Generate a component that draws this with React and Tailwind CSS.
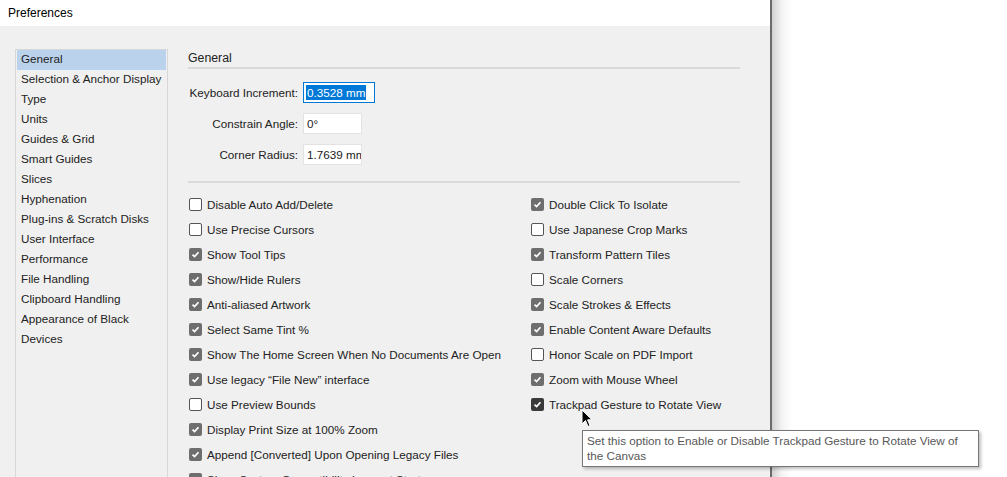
import { useState } from 'react'

const SECTIONS = [
  'General',
  'Selection & Anchor Display',
  'Type',
  'Units',
  'Guides & Grid',
  'Smart Guides',
  'Slices',
  'Hyphenation',
  'Plug-ins & Scratch Disks',
  'User Interface',
  'Performance',
  'File Handling',
  'Clipboard Handling',
  'Appearance of Black',
  'Devices',
]

const LEFT_OPTIONS = [
  { label: 'Disable Auto Add/Delete', on: false },
  { label: 'Use Precise Cursors', on: false },
  { label: 'Show Tool Tips', on: true },
  { label: 'Show/Hide Rulers', on: true },
  { label: 'Anti-aliased Artwork', on: true },
  { label: 'Select Same Tint %', on: true },
  { label: 'Show The Home Screen When No Documents Are Open', on: true },
  { label: 'Use legacy \u201cFile New\u201d interface', on: true },
  { label: 'Use Preview Bounds', on: false },
  { label: 'Display Print Size at 100% Zoom', on: true },
  { label: 'Append [Converted] Upon Opening Legacy Files', on: true },
  { label: 'Show System Compatibility Issue at Startup', on: true },
]

const RIGHT_OPTIONS = [
  { label: 'Double Click To Isolate', on: true },
  { label: 'Use Japanese Crop Marks', on: false },
  { label: 'Transform Pattern Tiles', on: true },
  { label: 'Scale Corners', on: false },
  { label: 'Scale Strokes & Effects', on: true },
  { label: 'Enable Content Aware Defaults', on: true },
  { label: 'Honor Scale on PDF Import', on: false },
  { label: 'Zoom with Mouse Wheel', on: true },
  { label: 'Trackpad Gesture to Rotate View', on: true, hover: true },
]

function Checkbox({ on, hover }) {
  if (!on) {
    return <span className="w-[13px] h-[13px] shrink-0 bg-white border border-[#555] rounded-[2px]" />
  }
  return (
    <span className={`w-[13px] h-[13px] shrink-0 rounded-[2px] flex items-center justify-center ${hover ? 'bg-[#3a3a3a]' : 'bg-[#6e6e6e]'}`}>
      <svg width="9" height="9" viewBox="0 0 9 9">
        <path d="M1.5 4.6 L3.6 6.6 L7.5 2.2" fill="none" stroke="#fff" strokeWidth="1.7" />
      </svg>
    </span>
  )
}

function Option({ label, on, hover }) {
  return (
    <div className="h-[25px] flex items-center gap-[5px]">
      <Checkbox on={on} hover={hover} />
      <span className="whitespace-nowrap">{label}</span>
    </div>
  )
}

function Field({ label, children }) {
  return (
    <div className="flex items-center h-[31px]">
      <span className="w-[111px] text-right pr-[1px] whitespace-nowrap">{label}</span>
      <div className="ml-[4px]">{children}</div>
    </div>
  )
}

export default function App() {
  const [selected, setSelected] = useState('General')

  return (
    <div className="relative w-[1007px] h-[477px] overflow-hidden bg-white flex text-[11.7px] text-[#222] font-['Liberation_Sans',Arial,sans-serif]">
      {/* Dialog window */}
      <div className="w-[772px] shrink-0 flex flex-col border-r-2 border-[#6b6b6b]">
        <div className="h-[26px] shrink-0 bg-white flex items-center px-[8px] text-[12px] text-black">Preferences</div>
        <div className="flex-1 bg-[#f0f0f0] flex pt-[23px] pl-[15px]">
          {/* Section list */}
          <div className="w-[153px] shrink-0 border border-[#d7d7d7] px-[1px] h-[460px]">
            {SECTIONS.map(s => (
              <div
                key={s}
                onClick={() => setSelected(s)}
                className={`h-[20px] flex items-center px-[4px] pb-[2px] whitespace-nowrap ${selected === s ? 'bg-[#bbd2ec]' : ''}`}
              >
                {s}
              </div>
            ))}
          </div>

          {/* Panel */}
          <div className="ml-[20px] w-[552px]">
            <div className="h-[19px] flex items-center text-[12.3px]">General</div>
            <div className="h-[2px] bg-[#dadada] mt-[-1px]" />

            <div className="mt-[8px]">
              <Field label="Keyboard Increment:">
                <div className="w-[72px] h-[21px] bg-white border border-[#0078d7] flex items-center px-[2px]">
                  <span className="bg-[#0078d7] text-white px-[1px] leading-[15px] whitespace-nowrap">0.3528 mm</span>
                </div>
              </Field>
              <Field label="Constrain Angle:">
                <div className="w-[59px] h-[21px] bg-white border border-[#e3e3e3] flex items-center px-[3px]">0°</div>
              </Field>
              <Field label="Corner Radius:">
                <div className="w-[59px] h-[21px] bg-white border border-[#e3e3e3] flex items-center px-[3px] overflow-hidden whitespace-nowrap">1.7639 mm</div>
              </Field>
            </div>

            <div className="h-[2px] bg-[#dadada] mt-[11px]" />

            <div className="flex mt-[9px] pl-[1px]">
              <div className="w-[342px]">
                {LEFT_OPTIONS.map(o => <Option key={o.label} {...o} />)}
              </div>
              <div>
                {RIGHT_OPTIONS.map(o => <Option key={o.label} {...o} />)}
              </div>
            </div>
          </div>
        </div>
      </div>

      {/* Window shadow on desktop */}
      <div className="flex-1 bg-[linear-gradient(to_right,#d2d2d2,#f4f4f4_10px,#ffffff_20px)]" />

      {/* Cursor */}
      <svg className="absolute left-[581px] top-[409px]" width="12" height="19" viewBox="0 0 12 19">
        <path d="M1 1 L1 15 L4.5 11.5 L7 17.5 L9 16.6 L6.6 10.8 L11 10.8 Z" fill="#000" stroke="#fff" strokeWidth="1" />
      </svg>

      {/* Tooltip */}
      <div className="absolute left-[582px] top-[430px] w-[397px] bg-white border border-[#767676] shadow-[2px_2px_3px_rgba(0,0,0,0.25)] px-[4px] pt-[2px] pb-[3px] text-[11.7px] leading-[15px] text-[#575757]">
        Set this option to Enable or Disable Trackpad Gesture to Rotate View of the Canvas
      </div>
    </div>
  )
}
